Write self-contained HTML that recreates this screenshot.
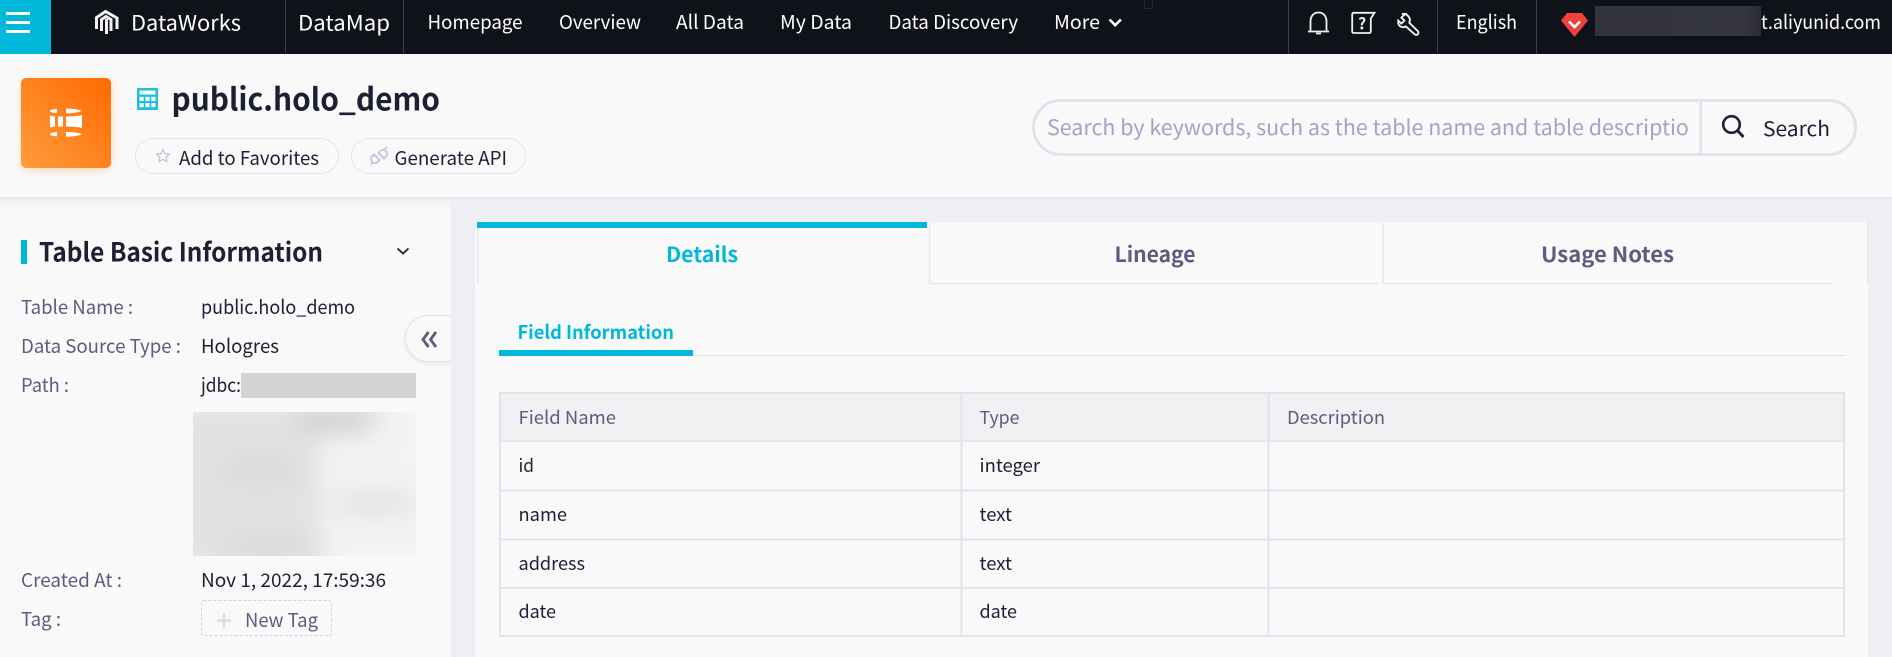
<!DOCTYPE html>
<html lang="en">
<head>
<meta charset="utf-8">
<title>DataMap - public.holo_demo</title>
<style>
html,body{margin:0;padding:0;width:1892px;height:657px;overflow:hidden;background:#f9f9f9}
svg{display:block}
text{font-family:"Noto Sans CJK SC","Liberation Sans",sans-serif;white-space:pre}
.n{fill:#fff;font-size:18px}
.d{fill:#1d1f33;font-size:18px}
.g{fill:#5b5d7e;font-size:18px}
.b{font-weight:700}
</style>
</head>
<body>
<svg width="1892" height="657" viewBox="0 0 1892 657" xmlns="http://www.w3.org/2000/svg">
<defs>
<linearGradient id="og" x1="0" y1="1" x2="1" y2="0"><stop offset="0" stop-color="#ff9c3e"/><stop offset="1" stop-color="#ff6a00"/></linearGradient>
<linearGradient id="ps" x1="0" y1="0" x2="0" y2="1"><stop offset="0" stop-color="#f0f0f4"/><stop offset="1" stop-color="#f9f9f9"/></linearGradient>
<filter id="bl" x="-40%" y="-80%" width="180%" height="260%"><feGaussianBlur stdDeviation="12"/></filter>
<filter id="sh" x="-30%" y="-30%" width="160%" height="160%"><feGaussianBlur stdDeviation="5"/></filter>
<filter id="sh2" x="-30%" y="-30%" width="160%" height="160%"><feGaussianBlur stdDeviation="2"/></filter>
<clipPath id="bc"><rect x="193" y="412" width="223" height="144"/></clipPath>
<clipPath id="pc"><rect x="1040" y="105" width="648" height="45"/></clipPath>
<linearGradient id="tb" x1="0" y1="0" x2="1" y2="0"><stop offset="0" stop-color="#33343b"/><stop offset=".9" stop-color="#35363e"/><stop offset="1" stop-color="#2b2c33"/></linearGradient>
</defs>

<!-- page background -->
<rect width="1892" height="657" fill="#eeeff4"/>
<rect x="0" y="54" width="1892" height="144" fill="#f9f9f9"/>
<rect x="0" y="197" width="1892" height="2" fill="#e9e9ee"/>

<!-- top bar -->
<rect width="1892" height="54" fill="#0f1219"/>
<rect width="51" height="54" fill="#00b9da"/>
<rect x="6" y="12" width="24" height="3" fill="#fff"/>
<rect x="6" y="21" width="24" height="3" fill="#fff"/>
<rect x="6" y="30" width="24" height="3" fill="#fff"/>

<!-- DataWorks logo -->
<g fill="none" stroke="#f2f2f2" stroke-width="3">
<path d="M96.500 29V17.500L105.500 11.500l11.500 6.500V29"/>
<path d="M101.500 31V19.500l4.500-3 5 3V31"/>
<path d="M106.500 34V19"/>
</g>
<text class="n" x="131" y="30.500" style="font-size:21px" textLength="110" lengthAdjust="spacingAndGlyphs">DataWorks</text>
<rect x="285" y="0" width="1" height="54" fill="#3c3e46"/>
<rect x="403" y="0" width="1" height="54" fill="#3c3e46"/>
<text class="n" x="298" y="30.500" style="font-size:21px" textLength="92" lengthAdjust="spacingAndGlyphs">DataMap</text>
<text class="n" x="427.500" y="29" style="font-size:19px" textLength="95" lengthAdjust="spacingAndGlyphs">Homepage</text>
<text class="n" x="559" y="29" style="font-size:19px" textLength="82" lengthAdjust="spacingAndGlyphs">Overview</text>
<text class="n" x="676" y="29" style="font-size:19px" textLength="68" lengthAdjust="spacingAndGlyphs">All Data</text>
<text class="n" x="780" y="29" style="font-size:19px" textLength="72" lengthAdjust="spacingAndGlyphs">My Data</text>
<text class="n" x="888.500" y="29" style="font-size:19px" textLength="129.500" lengthAdjust="spacingAndGlyphs">Data Discovery</text>
<text class="n" x="1054" y="29" style="font-size:19px" textLength="46" lengthAdjust="spacingAndGlyphs">More</text>
<path d="M1109.500 19.500l5.700 5.700 5.700-5.700" fill="none" stroke="#fff" stroke-width="2.600"/>
<rect x="1144.500" y="-1" width="8" height="9.500" fill="none" stroke="#23262d" stroke-width="1"/>
<rect x="1288" y="0" width="1" height="54" fill="#3c3e46"/>
<rect x="1437" y="0" width="1" height="54" fill="#3c3e46"/>
<rect x="1536" y="0" width="1" height="54" fill="#3c3e46"/>

<!-- bell -->
<path d="M1310.500 31V21.500c0-5.600 3.400-9 8-9s8 3.400 8 9V31M1308 31.500h21M1316 33.500h5" fill="none" stroke="#f0f0f0" stroke-width="1.800"/>
<!-- help -->
<path d="M1374.500 12.800h-20.500c-1.200 0-1.800.7-1.800 1.800v16.600c0 1.100.6 1.800 1.800 1.800h15c1.200 0 1.800-.7 1.800-1.800V18.500z" fill="none" stroke="#f0f0f0" stroke-width="1.800"/>
<text x="1358" y="29.500" fill="#f0f0f0" class="b" style="font-size:16px">?</text>
<!-- wrench -->
<path d="M1404.500 15.500l-3.600 3.600 3 3-3 3-3.100-3c-.8 3.400 1.300 6.400 4.400 6.600 1.200.1 2.300-.2 3.200-.8l8.600 7.800c1 .9 2.400.9 3.300 0 .9-1 .8-2.300-.1-3.200l-8.400-8.200c1-2.400.6-4.800-1-6.600-1.500-1.700-4-2.600-6.300-2.200z" fill="none" stroke="#f0f0f0" stroke-width="1.900" transform="translate(.5 -1.500)"/>
<text class="n" x="1456" y="29" style="font-size:19px" textLength="61" lengthAdjust="spacingAndGlyphs">English</text>

<!-- VIP diamond -->
<path d="M1561 20.500l6-7.500h15l6 7.500-13.500 16.500z" fill="#f43f3f"/>
<path d="M1569 21.500l5.500 5.500 5.500-5.500" fill="none" stroke="#fff" stroke-width="2.600"/>
<rect x="1595" y="6" width="166" height="30" fill="url(#tb)"/>
<text class="n" x="1761" y="29" style="font-size:19px" textLength="120" lengthAdjust="spacingAndGlyphs">t.aliyunid.com</text>

<!-- orange tile -->
<rect x="23" y="84" width="87" height="86" rx="6" fill="#ff8b2e" opacity=".35" filter="url(#sh)"/>
<rect x="21" y="78" width="90" height="90" rx="5" fill="url(#og)"/>
<g fill="#fff">
<path d="M50 110.500c2-1 4.500-1.500 7-1.800v4.600c-2.500-.3-5-.8-7-1.600z"/>
<path d="M66 108.600c6 0 12 .7 16 2.400-4 1.500-10 2.400-16 2.400z"/>
<path d="M50 115.500c1.500.5 3.200.8 5 1v10c-1.800.2-3.500.5-5 1z"/>
<rect x="58" y="116.500" width="5" height="10"/>
<path d="M66 116.500c6 0 11.500-.3 16-1.500v13c-4.500-1.200-10-1.500-16-1.500z"/>
<path d="M50 133.500c2-1 4.500-1.300 7-1.500v4.500c-2.500-.2-5-.6-7-1.600z"/>
<path d="M66 132c6 0 12 .6 16 2.200-4 1.800-10 2.500-16 2.500z"/>
</g>

<!-- title -->
<rect x="137" y="88" width="21" height="22" rx="1" fill="#1fbfdd"/>
<g fill="#f4fbfd">
<rect x="139.500" y="90.500" width="16" height="4"/>
<rect x="139.500" y="96.800" width="4.200" height="4.200"/><rect x="145.400" y="96.800" width="4.200" height="4.200"/><rect x="151.300" y="96.800" width="4.200" height="4.200"/>
<rect x="139.500" y="103" width="4.200" height="4.200"/><rect x="145.400" y="103" width="4.200" height="4.200"/><rect x="151.300" y="103" width="4.200" height="4.200"/>
</g>
<text class="d b" x="171.500" y="110.500" style="font-size:31px" textLength="268.500" lengthAdjust="spacingAndGlyphs">public.holo_demo</text>

<!-- action buttons -->
<rect x="135.500" y="138.500" width="203" height="35" rx="17.500" fill="#f9f9f9" stroke="#e2e3ef"/>
<path d="M163 149.500l1.900 4 4.400.6-3.200 3 .8 4.400-3.900-2.100-3.900 2.100.8-4.400-3.200-3 4.400-.6z" fill="none" stroke="#c4c7dc" stroke-width="1.400"/>
<text class="d" x="179" y="165" style="font-size:19px" textLength="140" lengthAdjust="spacingAndGlyphs">Add to Favorites</text>
<rect x="351.500" y="138.500" width="174" height="35" rx="17.500" fill="#f9f9f9" stroke="#e2e3ef"/>
<g fill="none" stroke="#c4c7dc" stroke-width="1.900">
<path d="M377 162.500a4 4 0 0 1-5.500-5.500l2.500-2.500 5.500 5.500z"/>
<path d="M381 150.500a4 4 0 0 1 5.500 5.500l-2.500 2.500-5.500-5.500z"/>
<path d="M371 164.500l2-2M385 149l2-2"/>
</g>
<text class="d" x="394.500" y="165" style="font-size:19px" textLength="112.500" lengthAdjust="spacingAndGlyphs">Generate API</text>

<!-- search -->
<rect x="1033.500" y="100.500" width="822" height="54" rx="27" fill="#f9f9f9" stroke="#e0e2ee" stroke-width="3"/>
<rect x="1699.500" y="101" width="2.500" height="53" fill="#e0e2ee"/>
<g clip-path="url(#pc)">
<text x="1047" y="135" fill="#a2a4c2" style="font-size:21px" textLength="655" lengthAdjust="spacingAndGlyphs">Search by keywords, such as the table name and table description</text>
</g>
<circle cx="1731.500" cy="124.500" r="8.300" fill="none" stroke="#1d1f33" stroke-width="2.600"/>
<path d="M1737.500 130.500l6 6.500" stroke="#1d1f33" stroke-width="2.800" fill="none"/>
<text class="d" x="1763" y="136" style="font-size:20px" textLength="67" lengthAdjust="spacingAndGlyphs">Search</text>

<!-- left panel -->
<rect x="0" y="199" width="451" height="458" fill="#f9f9f9"/>
<rect x="0" y="199" width="451" height="10" fill="url(#ps)"/>
<rect x="21" y="240" width="6" height="24" fill="#00b9da"/>
<text class="d b" x="39" y="261.500" style="font-size:26px" textLength="284" lengthAdjust="spacingAndGlyphs">Table Basic Information</text>
<path d="M397.500 248.500l5.500 5 5.500-5" fill="none" stroke="#1d1f33" stroke-width="1.800"/>

<text class="g" x="21" y="314" style="font-size:19px" textLength="112" lengthAdjust="spacingAndGlyphs">Table Name :</text>
<text class="d" x="201" y="314" style="font-size:19px" textLength="154" lengthAdjust="spacingAndGlyphs">public.holo_demo</text>
<text class="g" x="21" y="353" style="font-size:19px" textLength="160" lengthAdjust="spacingAndGlyphs">Data Source Type :</text>
<text class="d" x="201" y="353" style="font-size:19px" textLength="78" lengthAdjust="spacingAndGlyphs">Hologres</text>
<text class="g" x="21" y="392" style="font-size:19px" textLength="48" lengthAdjust="spacingAndGlyphs">Path :</text>
<text class="d" x="201" y="392" style="font-size:19px" textLength="40" lengthAdjust="spacingAndGlyphs">jdbc:</text>
<rect x="241" y="373" width="175" height="25" fill="#d3d3d5"/>
<g clip-path="url(#bc)">
<rect x="193" y="412" width="223" height="144" fill="#f3f3f3"/>
<g filter="url(#bl)">
<rect x="170" y="405" width="150" height="160" fill="#e2e2e2"/>
<ellipse cx="335" cy="420" rx="45" ry="14" fill="#d0d0d0"/>
<ellipse cx="260" cy="470" rx="40" ry="14" fill="#d9d9d9"/>
<ellipse cx="375" cy="503" rx="45" ry="12" fill="#e2e2e2"/>
<ellipse cx="270" cy="550" rx="55" ry="12" fill="#d8d8d8"/>
</g>
</g>
<text class="g" x="21" y="587" style="font-size:19px" textLength="101" lengthAdjust="spacingAndGlyphs">Created At :</text>
<text class="d" x="201" y="587" style="font-size:19px" textLength="185" lengthAdjust="spacingAndGlyphs">Nov 1, 2022, 17:59:36</text>
<text class="g" x="21" y="626" style="font-size:19px" textLength="40" lengthAdjust="spacingAndGlyphs">Tag :</text>
<rect x="201.500" y="600.500" width="130" height="35" rx="2" fill="#f9f9f9" stroke="#cfd1e3" stroke-dasharray="3 2"/>
<path d="M217 620.500h14M224 613.500v14" stroke="#d9dbe8" stroke-width="2.400" fill="none"/>
<text class="g" x="245" y="627" style="font-size:19px" textLength="73" lengthAdjust="spacingAndGlyphs">New Tag</text>

<!-- collapse -->
<path d="M451 317h-23a23 23 0 0 0 0 46h23z" fill="#c8cadc" opacity=".45" filter="url(#sh2)"/>
<path d="M452 315.500h-23.500a23 23 0 0 0 0 46H452z" fill="#f9f9f9" stroke="#e2e3ef"/>
<rect x="451" y="310" width="2" height="56" fill="#eeeff4"/>
<path d="M428.500 332l-5.500 7.500 5.500 7.500M436 332l-5.500 7.500 5.500 7.500" fill="none" stroke="#5b5d7e" stroke-width="2.800"/>

<!-- main panel -->
<rect x="475" y="222" width="1393" height="435" fill="#f9f9f9"/>
<rect x="1868" y="222" width="24" height="435" fill="#eeeff4"/>
<rect x="477" y="222" width="1.500" height="62" fill="#e6e7ef"/>
<rect x="477" y="222" width="450" height="6" fill="#00b9da"/>
<path d="M929.500 223v60.500H1379" fill="none" stroke="#e6e7f0" stroke-width="1.600"/>
<path d="M1383 223v60.500H1832" fill="none" stroke="#e6e7f0" stroke-width="1.600"/>
<rect x="1867" y="222" width="1" height="62" fill="#e6e7ef"/>
<text class="b" x="666" y="262" fill="#00b9da" style="font-size:21px" textLength="72" lengthAdjust="spacingAndGlyphs">Details</text>
<text class="g b" x="1114.500" y="262" style="font-size:21px" textLength="81" lengthAdjust="spacingAndGlyphs">Lineage</text>
<text class="g b" x="1541" y="262" style="font-size:21px" textLength="133" lengthAdjust="spacingAndGlyphs">Usage Notes</text>

<text class="b" x="517.500" y="339" fill="#00b9da" style="font-size:19px" textLength="156.500" lengthAdjust="spacingAndGlyphs">Field Information</text>
<rect x="499" y="355" width="1346" height="1" fill="#e3e4ee"/>
<rect x="499" y="350" width="194" height="6" fill="#00b9da"/>

<!-- table -->
<rect x="500" y="393" width="1344" height="48" fill="#f1f1f4"/>
<rect x="500" y="393" width="1344" height="243" fill="none" stroke="#e0e2ee" stroke-width="2"/>
<rect x="500" y="440.500" width="1344" height="1.500" fill="#e0e2ee"/>
<rect x="500" y="489.500" width="1344" height="2" fill="#e0e2ee"/>
<rect x="500" y="538.500" width="1344" height="2" fill="#e0e2ee"/>
<rect x="500" y="587" width="1344" height="1.500" fill="#e0e2ee"/>
<rect x="960.500" y="393" width="2" height="243" fill="#e0e2ee"/>
<rect x="1267.500" y="393" width="2" height="243" fill="#e0e2ee"/>

<text class="g" x="518.500" y="424" style="font-size:18px" textLength="97.500" lengthAdjust="spacingAndGlyphs">Field Name</text>
<text class="g" x="979.500" y="424" style="font-size:18px" textLength="40" lengthAdjust="spacingAndGlyphs">Type</text>
<text class="g" x="1287" y="424" style="font-size:18px" textLength="98" lengthAdjust="spacingAndGlyphs">Description</text>

<text class="d" x="518.500" y="472" textLength="15.500" lengthAdjust="spacingAndGlyphs">id</text>
<text class="d" x="979.500" y="472" textLength="60.500" lengthAdjust="spacingAndGlyphs">integer</text>
<text class="d" x="518.500" y="521" textLength="48.500" lengthAdjust="spacingAndGlyphs">name</text>
<text class="d" x="979.500" y="521" textLength="32.500" lengthAdjust="spacingAndGlyphs">text</text>
<text class="d" x="518.500" y="570" textLength="66.500" lengthAdjust="spacingAndGlyphs">address</text>
<text class="d" x="979.500" y="570" textLength="32.500" lengthAdjust="spacingAndGlyphs">text</text>
<text class="d" x="518.500" y="618" textLength="37.500" lengthAdjust="spacingAndGlyphs">date</text>
<text class="d" x="979.500" y="618" textLength="37.500" lengthAdjust="spacingAndGlyphs">date</text>
</svg>
</body>
</html>
